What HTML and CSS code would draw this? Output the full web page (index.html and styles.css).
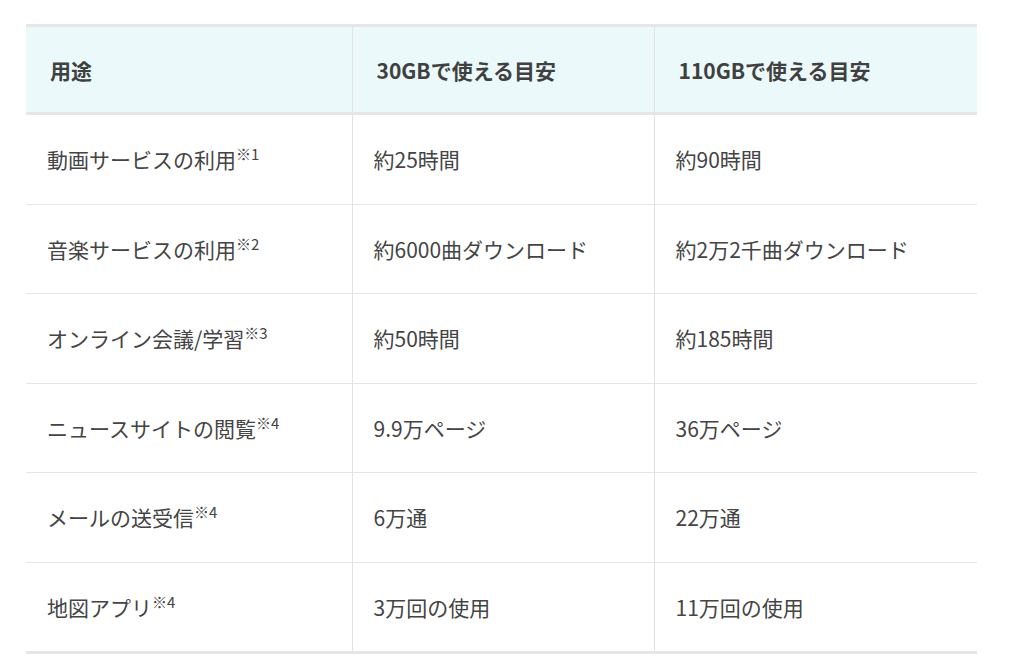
FILE: index.html
```html
<!DOCTYPE html>
<html lang="ja">
<head>
<meta charset="utf-8">
<title>データ容量の目安</title>
<link rel="stylesheet" href="styles.css">
</head>
<body>
<div class="wrap">
  <table class="usage">
    <colgroup>
      <col class="c1">
      <col class="c2">
      <col class="c3">
    </colgroup>
    <thead>
      <tr>
        <th>用途</th>
        <th>30GBで使える目安</th>
        <th>110GBで使える目安</th>
      </tr>
    </thead>
    <tbody>
      <tr>
        <td>動画サービスの利用<sup>※1</sup></td>
        <td>約25時間</td>
        <td>約90時間</td>
      </tr>
      <tr>
        <td>音楽サービスの利用<sup>※2</sup></td>
        <td>約6000曲ダウンロード</td>
        <td>約2万2千曲ダウンロード</td>
      </tr>
      <tr>
        <td>オンライン会議/学習<sup>※3</sup></td>
        <td>約50時間</td>
        <td>約185時間</td>
      </tr>
      <tr>
        <td>ニュースサイトの閲覧<sup>※4</sup></td>
        <td>9.9万ページ</td>
        <td>36万ページ</td>
      </tr>
      <tr>
        <td>メールの送受信<sup>※4</sup></td>
        <td>6万通</td>
        <td>22万通</td>
      </tr>
      <tr>
        <td>地図アプリ<sup>※4</sup></td>
        <td>3万回の使用</td>
        <td>11万回の使用</td>
      </tr>
    </tbody>
  </table>
</div>
</body>
</html>
```

FILE: styles.css
```css
html, body {
  margin: 0;
  padding: 0;
  background: #ffffff;
}

body {
  font-family: "Noto Sans CJK JP", "Noto Sans", sans-serif;
  color: #444444;
}

.wrap {
  padding: 24px 0 0 26px;
}

.usage {
  width: 951px;
  table-layout: fixed;
  border-collapse: collapse;
  border-top: 3px solid #e6e6e6;
  border-bottom: 3px solid #e6e6e6;
}

.c1 { width: 326px; }
.c2 { width: 302px; }
.c3 { width: 323px; }

.usage th {
  background: #ebf9fb;
  height: 85px;
  padding: 0 0 0 24px;
  text-align: left;
  font-size: 21px;
  font-weight: 700;
  color: #404040;
  border-bottom: 3px solid #e6e6e6;
  border-left: 1px solid #e3e3e3;
  vertical-align: middle;
}

.usage td {
  height: 88.5px;
  padding: 0 0 0 21px;
  font-size: 21px;
  font-weight: 400;
  border-bottom: 1px solid #e6e6e6;
  border-left: 1px solid #e3e3e3;
  vertical-align: middle;
}

.usage th:first-child,
.usage td:first-child {
  border-left: none;
}

.usage tr:last-child td {
  border-bottom: none;
}

.usage sup {
  font-size: 15px;
  line-height: 0;
  vertical-align: 8px;
  margin-left: 0;
}
```
